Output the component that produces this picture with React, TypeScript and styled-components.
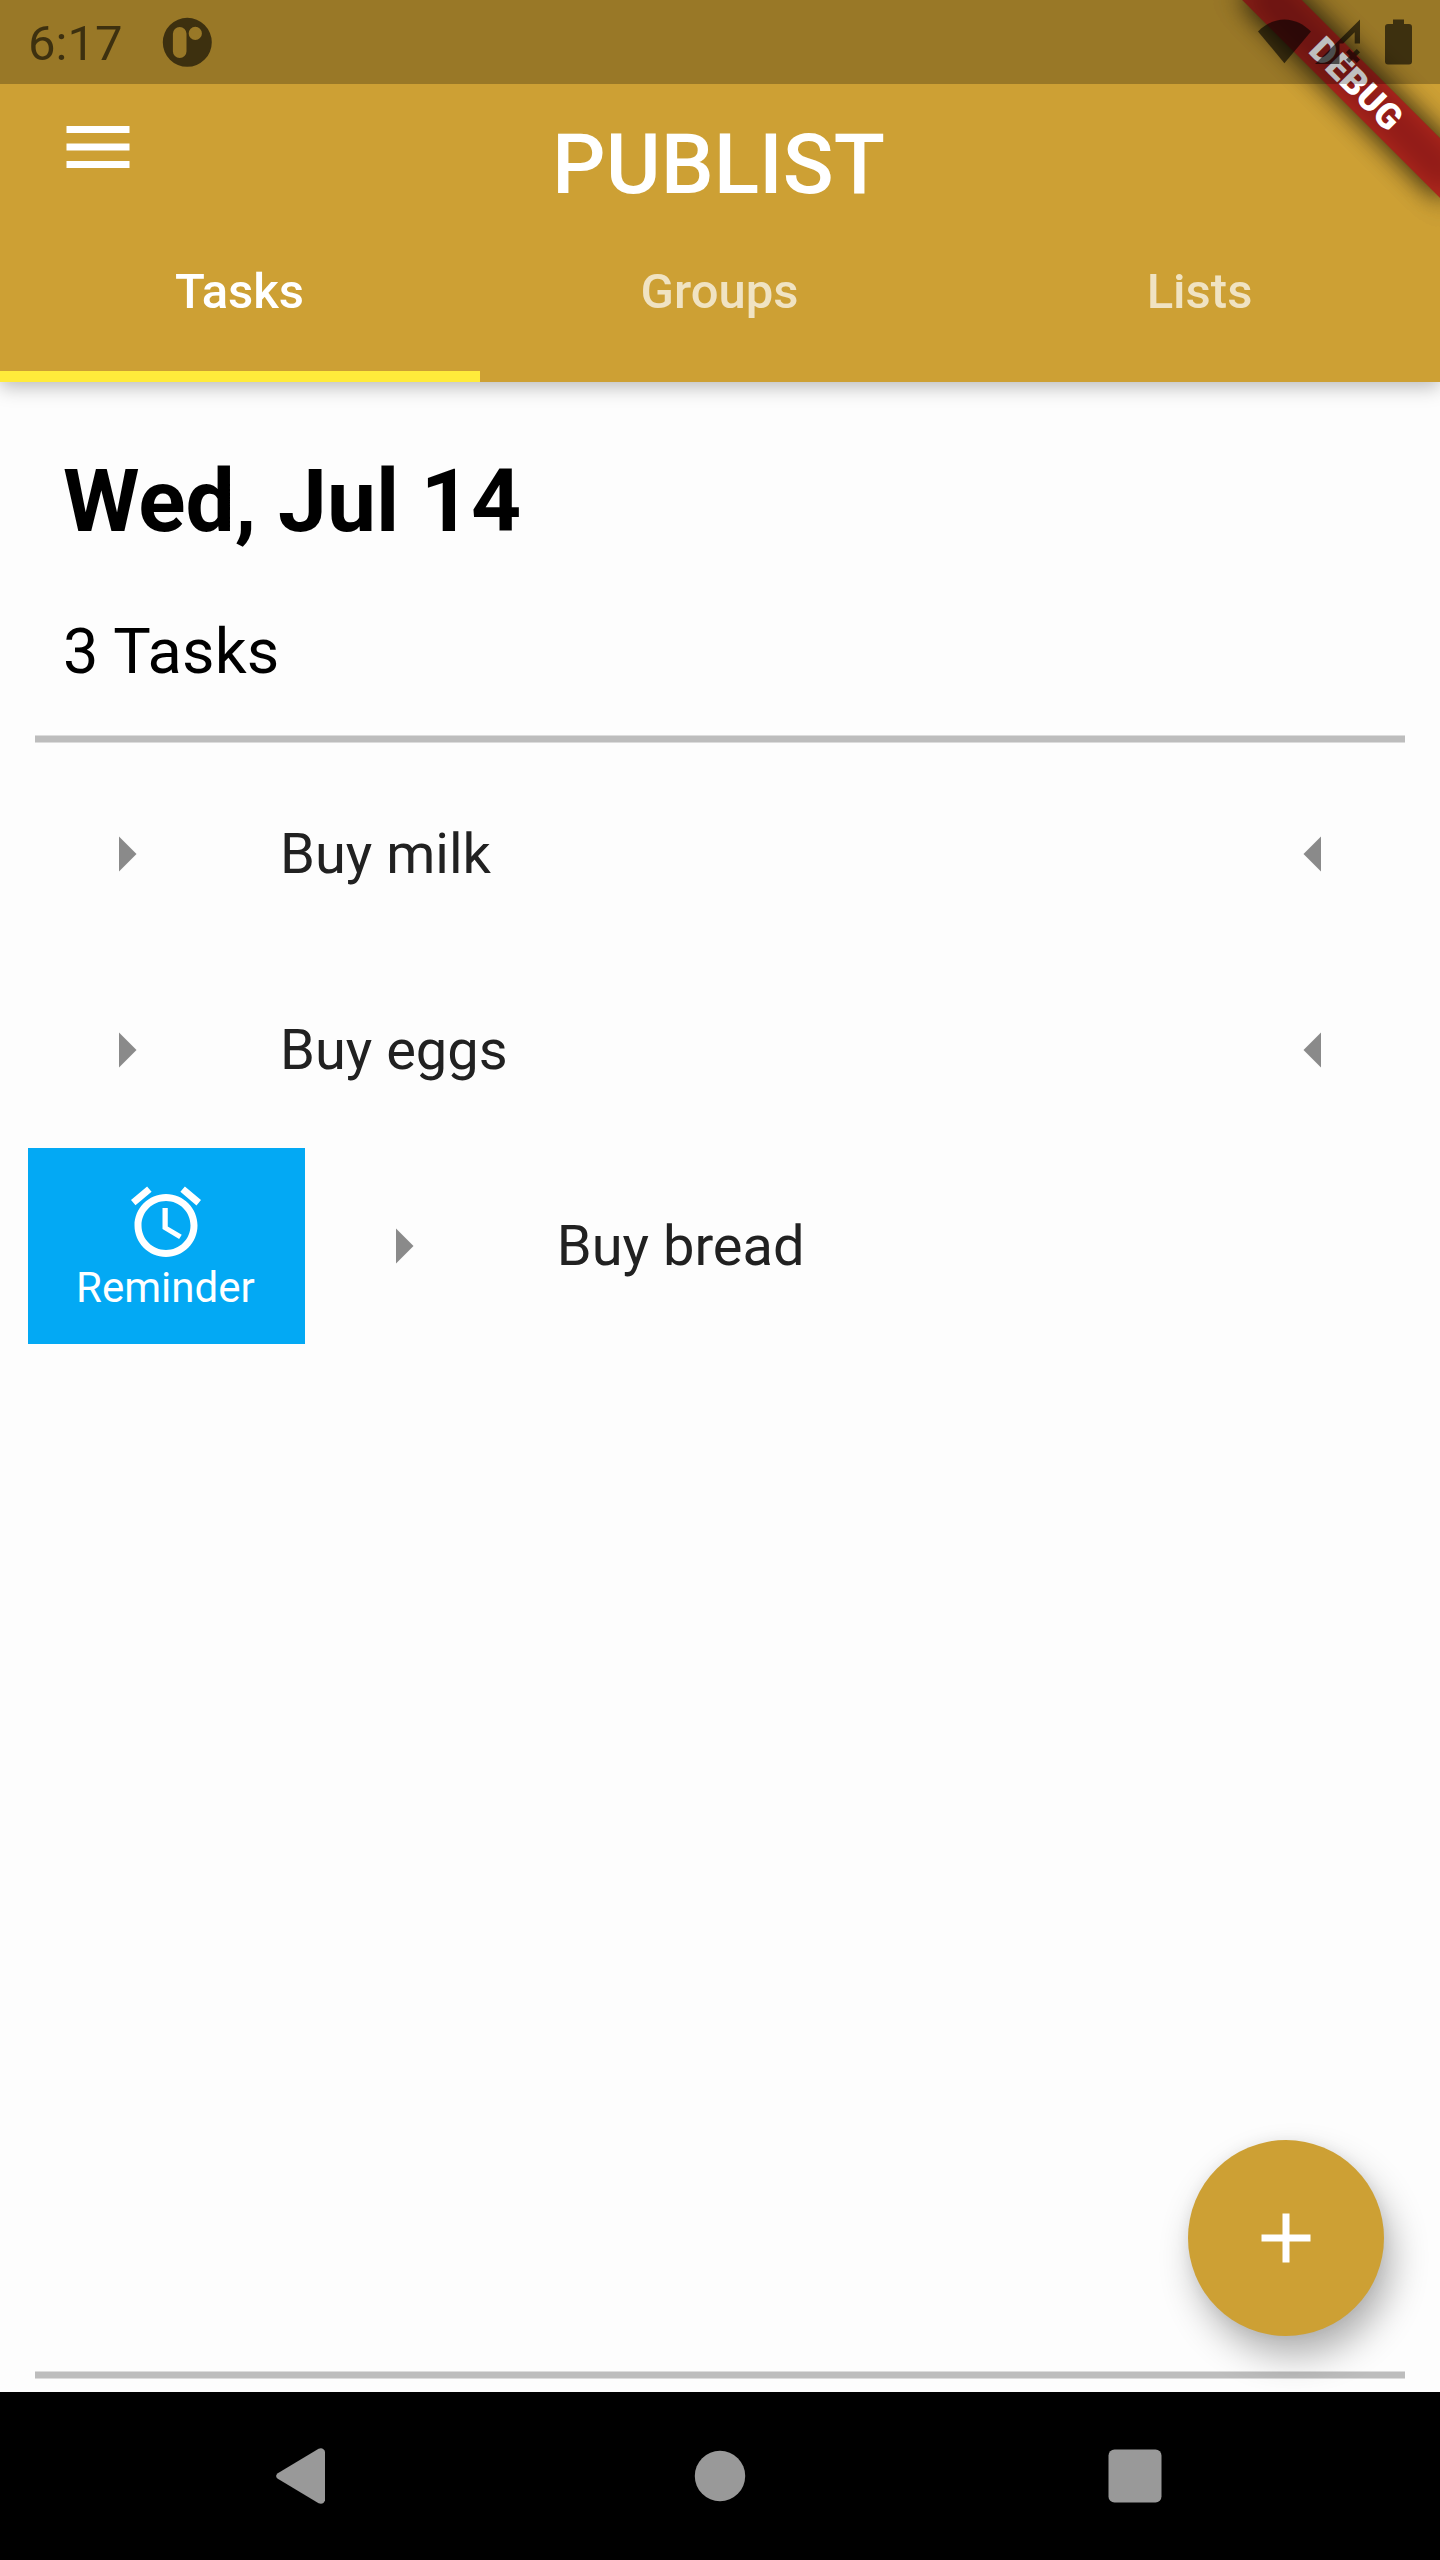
import React from 'react';
import styled, { createGlobalStyle } from 'styled-components';

const gold = '#cda034';

const GlobalStyle = createGlobalStyle`
  *, *::before, *::after { box-sizing: border-box; }
  html, body { margin: 0; padding: 0; }
  body { font-family: Roboto, 'Noto Sans', sans-serif; background: #fdfdfd; }
  svg { display: block; flex: none; }
  button { border: 0; padding: 0; margin: 0; background: none; font: inherit; color: inherit; }
  h1, h2, p, ul { margin: 0; padding: 0; font-weight: inherit; list-style: none; }
`;

const Screen = styled.div`
  position: relative;
  width: 1440px;
  height: 2560px;
  display: flex;
  flex-direction: column;
  overflow: hidden;
  background: #fdfdfd;
`;

const Header = styled.header`
  height: 382px;
  flex: none;
  display: flex;
  flex-direction: column;
  background: ${gold};
  box-shadow: 0 5px 18px rgba(0, 0, 0, 0.27);
`;

const StatusBar = styled.div`
  position: relative;
  z-index: 2;
  height: 84px;
  flex: none;
  display: flex;
  align-items: center;
  justify-content: space-between;
  padding: 0 28px;
  background: rgba(0, 0, 0, 0.25);
  color: rgba(0, 0, 0, 0.6);
`;

const StatusGroup = styled.div`
  display: flex;
  align-items: center;
  height: 84px;
`;

const Clock = styled.span`
  width: 134px;
  font-size: 49px;
  line-height: 58px;
  padding-top: 4px;
`;

const Toolbar = styled.div`
  height: 147px;
  flex: none;
  display: grid;
  grid-template-columns: 196px 1fr 199px;
  color: #fff;
`;

const MenuButton = styled.button`
  padding: 21px 0 0 56px;
  align-self: start;
`;

const Title = styled.h1`
  padding-top: 32px;
  text-align: center;
  font-size: 84px;
  line-height: 98px;
  font-weight: 500;
`;

const TabBar = styled.nav`
  flex: 1;
  display: grid;
  grid-template-columns: repeat(3, 1fr);
`;

const Tab = styled.button<{ $active?: boolean }>`
  display: flex;
  justify-content: center;
  align-items: flex-start;
  padding: 32px 1px 0 0;
  border-bottom: 11px solid ${(p) => (p.$active ? '#ffeb3b' : 'transparent')};
  color: ${(p) => (p.$active ? '#fff' : 'rgba(255, 255, 255, 0.7)')};
  font-size: 49px;
  line-height: 57px;
  font-weight: 500;
`;

const Content = styled.main`
  flex: 1;
  display: flex;
  flex-direction: column;
`;

const Summary = styled.section`
  height: 353px;
  flex: none;
  padding: 68px 63px 0;
  color: #000;
`;

const DateHeading = styled.h2`
  font-size: 87.5px;
  line-height: 103px;
  font-weight: 700;
`;

const TaskCount = styled.p`
  margin-top: 62px;
  font-size: 63px;
  line-height: 74px;
  letter-spacing: 0.2px;
`;

const Divider = styled.hr`
  flex: none;
  width: 1370px;
  height: 8px;
  margin: 0 auto;
  border: solid #dcdcdc;
  border-width: 1px 0;
  background: #bdbdbd;
`;

const TaskList = styled.ul`
  flex: 1;
  padding: 13px 28px 0;
`;

const TaskRow = styled.li`
  display: flex;
  height: 196px;
  overflow: hidden;
`;

const TaskTile = styled.div`
  flex: none;
  width: 1384px;
  display: flex;
  align-items: center;
  padding: 0 56px;
  color: #8a8a8a;
`;

const TaskName = styled.span`
  flex: 1;
  margin-left: 112px;
  font-size: 56px;
  line-height: 66px;
  color: #212121;
`;

const SlideAction = styled.button`
  flex: none;
  width: 276.8px;
  display: flex;
  flex-direction: column;
  align-items: center;
  padding-top: 32px;
  background: #03a9f4;
  color: #fff;
`;

const ActionLabel = styled.span`
  margin-top: -1px;
  padding-right: 2px;
  font-size: 42px;
  line-height: 49px;
`;

const Fab = styled.button`
  position: absolute;
  z-index: 1;
  left: 1188px;
  top: 2140px;
  width: 196px;
  height: 196px;
  display: flex;
  align-items: center;
  justify-content: center;
  border-radius: 50%;
  background: ${gold};
  color: #fff;
  box-shadow: 8px 20px 36px rgba(0, 0, 0, 0.3), 0 0 14px rgba(0, 0, 0, 0.06);
`;

const SystemNav = styled.footer`
  height: 168px;
  flex: none;
  margin-top: 13px;
  padding: 0 278px 0 276px;
  display: grid;
  grid-template-columns: 418px 1fr 54px;
  align-items: center;
  background: #000;
  color: #999;
`;

const BannerCorner = styled.div`
  position: absolute;
  z-index: 1;
  top: 0;
  right: 0;
  width: 320px;
  height: 320px;
  overflow: hidden;
`;

const Ribbon = styled.div`
  position: absolute;
  left: 96px;
  top: 63px;
  width: 280px;
  height: 42px;
  transform: rotate(45deg);
  display: flex;
  align-items: center;
  justify-content: center;
  color: #fff;
  font-size: 35.7px;
  font-weight: 900;
  line-height: 42px;

  &::before,
  &::after {
    content: '';
    position: absolute;
    inset: 0;
  }
  &::before {
    background: rgba(0, 0, 0, 0.5);
    filter: blur(13.9px);
  }
  &::after {
    background: rgba(183, 28, 28, 0.627);
  }
`;

const RibbonText = styled.span`
  position: relative;
  z-index: 1;
`;

const Glyph = ({ d, size = 84 }: { d: string; size?: number }) => (
  <svg width={size} height={size} viewBox="0 0 24 24" fill="currentColor">
    <path d={d} />
  </svg>
);

const icons = {
  menu: 'M3 18h18v-2H3v2zm0-5h18v-2H3v2zm0-7v2h18V6H3z',
  right: 'M10 17l5-5-5-5v10z',
  left: 'M14 7l-5 5 5 5V7z',
  plus: 'M19 13h-6v6h-2v-6H5v-2h6V5h2v6h6v2z',
  alarm:
    'M22 5.72l-4.6-3.86-1.29 1.53 4.6 3.86L22 5.72zM7.88 3.39L6.6 1.86 2 5.71l1.29 1.53 4.59-3.85zM12.5 8H11v6l4.75 2.85.75-1.23-4-2.37V8zM12 4c-4.97 0-9 4.03-9 9s4.02 9 9 9c4.97 0 9-4.03 9-9s-4.03-9-9-9zm0 16c-3.87 0-7-3.13-7-7s3.13-7 7-7 7 3.13 7 7-3.13 7-7 7z',
};

const AppBadge = () => (
  <svg width="50" height="84" viewBox="162 0 50 84" fill="currentColor" fillRule="evenodd">
    <path d="M187.3 17.8a24.5 24.5 0 1 0 0 49a24.5 24.5 0 1 0 0-49zM179.7 27a6.8 6.8 0 0 1 6.8 6.8v17.4a6.8 6.8 0 0 1-13.6 0V33.8a6.8 6.8 0 0 1 6.8-6.8zM195.3 26.8a6.6 6.6 0 1 1 0 13.2a6.6 6.6 0 1 1 0-13.2z" />
  </svg>
);

const StatusIcons = () => (
  <svg width="156" height="84" viewBox="1256 0 156 84" fill="currentColor">
    <path d="M1284.4 63.2L1258 31.4C1265 24.5 1274 19.5 1284.4 19.5S1304 24.5 1311 31.4z" />
    <path d="M1315 64L1360 19.5V43.5H1354.7V32.2L1343.2 43.5H1339.5V64z" />
    <path
      d="M1347.6 50.600L1358.400 61.400M1358.400 50.600L1347.600 61.400"
      fill="none"
      stroke="currentColor"
      strokeWidth="4.6"
    />
    <path d="M1393 19.5h11v4.5h5a3 3 0 0 1 3 3v34.5a3 3 0 0 1-3 3h-21a3 3 0 0 1-3-3V27a3 3 0 0 1 3-3h5z" />
  </svg>
);

const tasks = [
  { name: 'Buy milk', open: false },
  { name: 'Buy eggs', open: false },
  { name: 'Buy bread', open: true },
];

const tabs = ['Tasks', 'Groups', 'Lists'];

export default function App() {
  return (
    <>
      <GlobalStyle />
      <Screen>
        <Header>
          <StatusBar>
            <StatusGroup>
              <Clock>6:17</Clock>
              <AppBadge />
            </StatusGroup>
            <StatusIcons />
          </StatusBar>
          <Toolbar>
            <MenuButton aria-label="Menu">
              <Glyph d={icons.menu} />
            </MenuButton>
            <Title>PUBLIST</Title>
          </Toolbar>
          <TabBar>
            {tabs.map((tab, i) => (
              <Tab key={tab} $active={i === 0}>
                {tab}
              </Tab>
            ))}
          </TabBar>
        </Header>

        <Content>
          <Summary>
            <DateHeading>Wed, Jul 14</DateHeading>
            <TaskCount>3 Tasks</TaskCount>
          </Summary>
          <Divider />
          <TaskList>
            {tasks.map((task) => (
              <TaskRow key={task.name}>
                {task.open && (
                  <SlideAction>
                    <Glyph d={icons.alarm} />
                    <ActionLabel>Reminder</ActionLabel>
                  </SlideAction>
                )}
                <TaskTile>
                  <Glyph d={icons.right} />
                  <TaskName>{task.name}</TaskName>
                  <Glyph d={icons.left} />
                </TaskTile>
              </TaskRow>
            ))}
          </TaskList>
          <Divider />
        </Content>

        <SystemNav>
          <svg width="49" height="56" viewBox="0 0 49 56" fill="currentColor">
            <path d="M1.8 25.2L42.6.7Q47.5-.9 49 3.8V52.2Q47.5 56.9 42.6 55.3L1.8 30.8Q-1.6 28 1.8 25.2z" />
          </svg>
          <svg width="52" height="52" viewBox="0 0 52 52" fill="currentColor">
            <circle cx="26" cy="26" r="25.2" />
          </svg>
          <svg width="54" height="54" viewBox="0 0 54 54" fill="currentColor">
            <rect x="0.5" y="0.5" width="53" height="53" rx="6" />
          </svg>
        </SystemNav>

        <BannerCorner>
          <Ribbon />
          <Ribbon>
            <RibbonText>DEBUG</RibbonText>
          </Ribbon>
        </BannerCorner>

        <Fab aria-label="Add task">
          <Glyph d={icons.plus} />
        </Fab>
      </Screen>
    </>
  );
}
